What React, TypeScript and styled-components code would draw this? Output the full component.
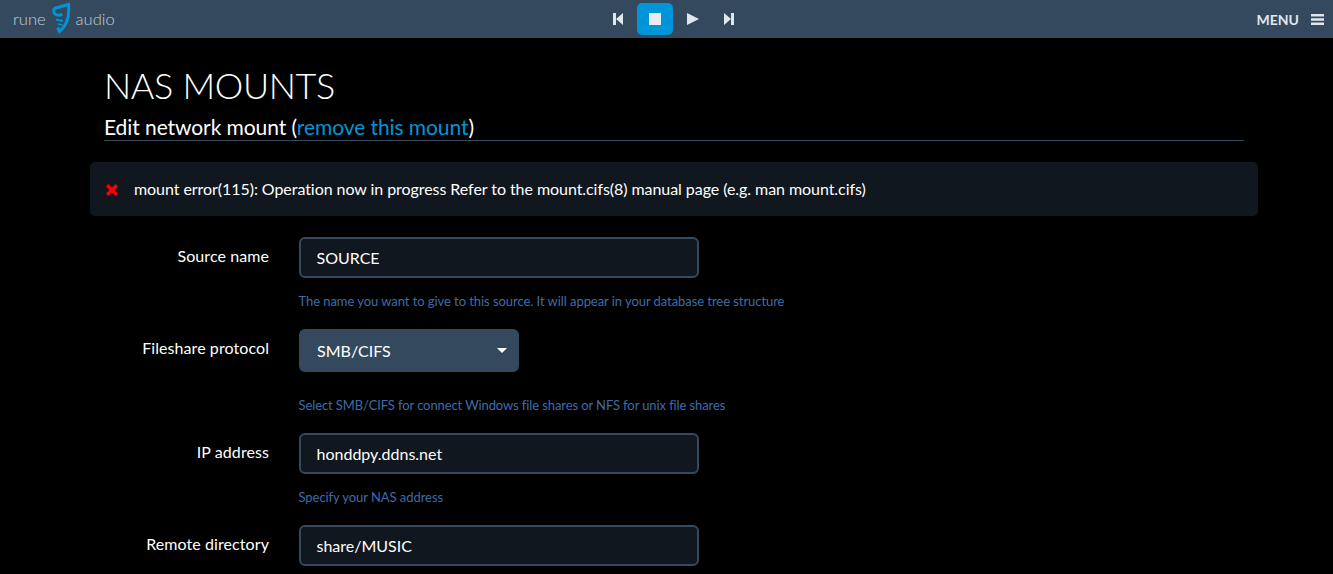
import React from 'react';
import styled, { createGlobalStyle } from 'styled-components';

const GlobalStyle = createGlobalStyle`
  html, body {
    margin: 0;
    padding: 0;
    height: 100%;
    overflow: hidden;
    background: #000;
    color: #fff;
    font-family: Lato, "Open Sans", sans-serif;
  }
  * { box-sizing: border-box; }
`;

const Field: React.FC<{ label: string; value: string; help: string }> = ({ label, value, help }) => (
  <FormRow>
    <FieldLabel>{label}</FieldLabel>
    <Control>
      <TextInput>{value}</TextInput>
      <Help>{help}</Help>
    </Control>
  </FormRow>
);

const App: React.FC = () => (
  <>
    <GlobalStyle />
    <Navbar>
      <Logo>
        <span>rune</span>
        <svg width="20" height="32" viewBox="0 0 20 32" fill="none" stroke="#0095d8">
          <path d="M3 6.5 L17.5 2.5 C18.5 12 16.5 23 8.5 29.5 L6.5 25.5" strokeWidth="3" />
          <path d="M3 6.5 C1.5 12 5 14.5 11.5 12.5" strokeWidth="3" />
          <path d="M5 17.5 L12 19" strokeWidth="1.8" />
          <path d="M7 22 L11.5 23" strokeWidth="1.6" />
        </svg>
        <span>audio</span>
      </Logo>
      <Player>
        <PlayerButton>
          <svg width="12" height="14" viewBox="0 0 12 14"><path d="M1 1h3v12H1zM4 7l7-6v12z" fill="#dfe6ee" /></svg>
        </PlayerButton>
        <PlayerButton $active>
          <svg width="14" height="14" viewBox="0 0 14 14"><path d="M1 1h12v12H1z" fill="#e6ecf2" /></svg>
        </PlayerButton>
        <PlayerButton>
          <svg width="14" height="14" viewBox="0 0 14 14"><path d="M2 1l12 6-12 6z" fill="#dfe6ee" /></svg>
        </PlayerButton>
        <PlayerButton>
          <svg width="12" height="14" viewBox="0 0 12 14"><path d="M1 1l7 6-7 6zM8 1h3v12H8z" fill="#dfe6ee" /></svg>
        </PlayerButton>
      </Player>
      <Menu>
        MENU
        <svg width="13" height="11" viewBox="0 0 13 11"><path d="M0 0h13v2.4H0zM0 4.3h13v2.4H0zM0 8.6h13V11H0z" fill="#dfe6ee" /></svg>
      </Menu>
    </Navbar>
    <Container>
      <Title>NAS MOUNTS</Title>
      <Legend>
        Edit network mount (<RemoveLink href="#">remove this mount</RemoveLink>)
      </Legend>
      <Alert>
        <svg width="14" height="14" viewBox="0 0 14 14"><path d="M3.4 1 7 4.6 10.6 1 13 3.4 9.4 7 13 10.6 10.6 13 7 9.4 3.4 13 1 10.6 4.6 7 1 3.4z" fill="#f00" /></svg>
        <span>mount error(115): Operation now in progress Refer to the mount.cifs(8) manual page (e.g. man mount.cifs)</span>
      </Alert>
      <Field
        label="Source name"
        value="SOURCE"
        help="The name you want to give to this source. It will appear in your database tree structure"
      />
      <FormRow>
        <FieldLabel>Fileshare protocol</FieldLabel>
        <Control>
          <SelectBox>
            SMB/CIFS
            <Caret />
          </SelectBox>
          <SelectHelp>Select SMB/CIFS for connect Windows file shares or NFS for unix file shares</SelectHelp>
        </Control>
      </FormRow>
      <Field label="IP address" value="honddpy.ddns.net" help="Specify your NAS address" />
      <Field label="Remote directory" value="share/MUSIC" help="" />
    </Container>
  </>
);

const Navbar = styled.header`
  height: 38px;
  background: #34495e;
  display: grid;
  grid-template-columns: 1fr auto 1fr;
  align-items: center;
  padding: 0 9px 0 13px;
`;

const Logo = styled.div`
  display: flex;
  align-items: center;
  gap: 5px;
  color: #c4ced8;
  font-size: 16.5px;
  font-weight: 300;
  svg { margin-top: -2px; }
`;

const Player = styled.nav`
  display: flex;
  align-items: center;
  gap: 1px;
  height: 38px;
  margin-left: 10px;
`;

const PlayerButton = styled.button<{ $active?: boolean }>`
  width: 36px;
  height: 32px;
  border: 0;
  padding: 0;
  border-radius: 5px;
  display: flex;
  align-items: center;
  justify-content: center;
  background: ${(p) => (p.$active ? '#0095d8' : 'transparent')};
`;

const Menu = styled.div`
  justify-self: end;
  display: flex;
  align-items: center;
  gap: 12px;
  color: #dfe6ee;
  font-size: 14px;
  font-weight: 700;
`;

const Container = styled.main`
  padding: 0 75px 0 90px;
`;

const Title = styled.h1`
  margin: 27px 0 0 14px;
  font-size: 36px;
  line-height: 40px;
  font-weight: 300;
  letter-spacing: -0.35px;
  color: #fff;
`;

const Legend = styled.div`
  margin: 0 14px;
  height: 36px;
  padding-top: 10px;
  font-size: 21px;
  line-height: 24px;
  letter-spacing: -0.08px;
  color: #fff;
  border-bottom: 1px solid #34495e;
`;

const RemoveLink = styled.a`
  color: #0095d8;
  text-decoration: none;
`;

const Alert = styled.div`
  margin: 21px 0;
  height: 54px;
  display: flex;
  align-items: center;
  gap: 15px;
  padding-left: 15px;
  background: #10171e;
  border-radius: 5px;
  font-size: 16px;
  letter-spacing: -0.06px;
  color: #fff;
  svg { margin-top: 2px; }
  span { margin-top: -2px; }
`;

const FormRow = styled.div`
  display: flex;
  align-items: flex-start;
  margin-top: 20px;
`;

const FieldLabel = styled.label`
  width: 179px;
  text-align: right;
  padding-top: 9px;
  font-size: 16px;
  line-height: 20px;
  letter-spacing: 0.08px;
  color: #fff;
`;

const Control = styled.div`
  margin-left: 30px;
`;

const TextInput = styled.div`
  width: 400px;
  height: 41px;
  display: flex;
  align-items: center;
  padding: 0 15.5px;
  background: #10171e;
  border: 2px solid #34495e;
  border-radius: 6px;
  font-size: 16px;
  color: #fff;
`;

const Help = styled.div`
  min-height: 31px;
  padding-top: 15px;
  font-size: 13px;
  line-height: 16px;
  letter-spacing: -0.06px;
  color: #3f6ca8;
  margin-left: -0.5px;
`;

const SelectBox = styled.div`
  width: 220px;
  height: 43px;
  display: flex;
  align-items: center;
  justify-content: space-between;
  padding: 0 12px 0 18px;
  background: #34495e;
  border-radius: 6px;
  font-size: 16px;
  color: #fff;
`;

const SelectHelp = styled(Help)`
  padding-top: 25px;
  letter-spacing: -0.1px;
`;

const Caret = styled.span`
  width: 0;
  height: 0;
  border-left: 5px solid transparent;
  border-right: 5px solid transparent;
  border-top: 5px solid #fff;
`;

export default App;
